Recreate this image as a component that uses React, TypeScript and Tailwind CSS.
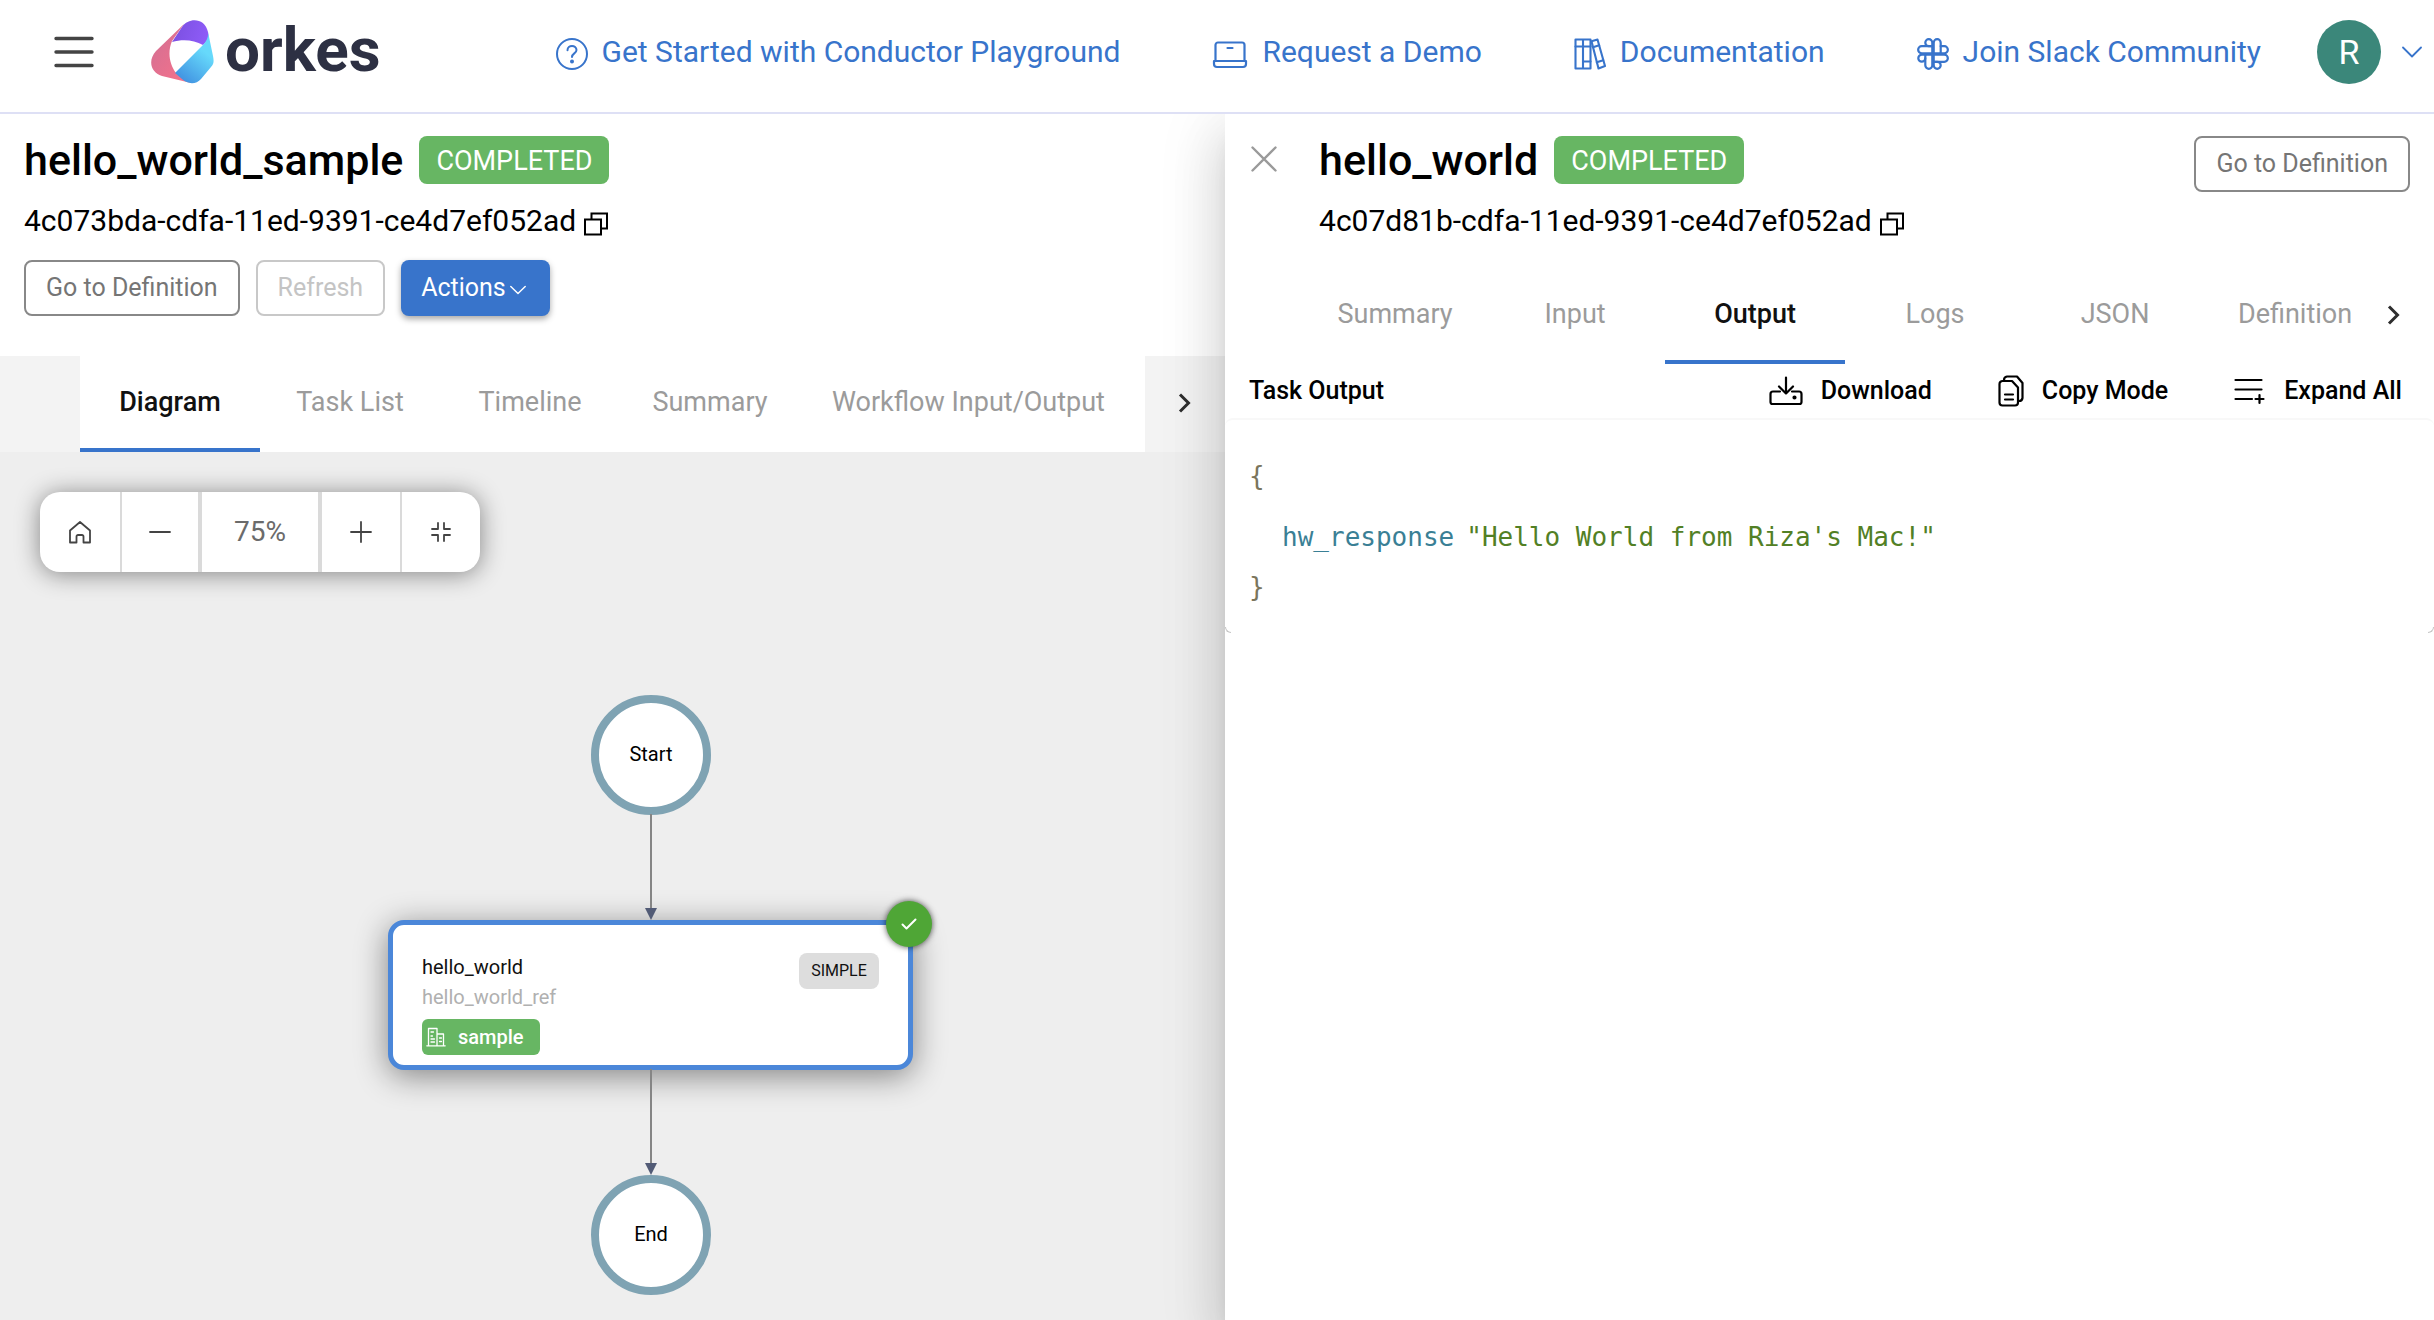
import type { ReactNode } from "react";

type IconProps = { className?: string };

const line = {
  fill: "none",
  stroke: "currentColor",
  strokeLinecap: "round",
  strokeLinejoin: "round",
} as const;

function LogoMark() {
  return (
    <svg viewBox="0 0 64 64" className="h-16 w-16" aria-hidden="true">
      <defs>
        <linearGradient id="mark-pink" x1="0" y1="0" x2="1" y2="1">
          <stop offset="0" stopColor="#cf6f94" />
          <stop offset="1" stopColor="#f9728a" />
        </linearGradient>
        <linearGradient id="mark-purple" x1="0" y1="0.3" x2="1" y2="0.5">
          <stop offset="0" stopColor="#7a4fe0" />
          <stop offset="1" stopColor="#8f5cf8" />
        </linearGradient>
        <linearGradient id="mark-blue" x1="0.8" y1="0" x2="0.2" y2="1">
          <stop offset="0.3" stopColor="#66d9fb" />
          <stop offset="1" stopColor="#3f8fe0" />
        </linearGradient>
      </defs>
      <path d="M33 4 L5 31 C-3 40 -1 52 11 56 L40 63 L25 53 C19 45 16 33 21 21 Z" fill="url(#mark-pink)" />
      <path d="M21 22 L31 7 C38 -3 54 -2 57 12 L58 19 L52 25 C43 20 32 19 21 22 Z" fill="url(#mark-purple)" />
      <path d="M57 12 L62 36 C63 41 63 44 60 47 L50 59 C45 65 36 64 31 59 L24 53 L52 25 C56 21 57.500 17 57 12 Z" fill="url(#mark-blue)" />
    </svg>
  );
}

function HelpIcon() {
  return (
    <svg viewBox="0 0 32 32" className="h-8 w-8" {...line} strokeWidth="2" aria-hidden="true">
      <circle cx="16" cy="16" r="15" />
      <path d="M11.500 12.200 C11.500 6.500 20.500 6.500 20.500 12 C20.500 15.500 16 15.300 16 19" />
      <circle cx="16" cy="23.500" r="1" fill="currentColor" />
    </svg>
  );
}

function LaptopIcon() {
  return (
    <svg viewBox="0 0 35 32" className="h-8 w-9" {...line} strokeWidth="2.200" aria-hidden="true">
      <path d="M3 22 V7 a2.500 2.500 0 0 1 2.500 -2.500 H29.500 a2.500 2.500 0 0 1 2.500 2.500 V22" />
      <path d="M1.500 23 H33.500 V26 a3 3 0 0 1 -3 3 H4.500 a3 3 0 0 1 -3 -3 Z" />
      <path d="M15 10 H20" />
    </svg>
  );
}

function BooksIcon() {
  return (
    <svg viewBox="0 0 32 32" className="h-8 w-8" {...line} strokeWidth="2.100" aria-hidden="true">
      <path d="M1.500 1.500 H9 V30.500 H1.500 Z M9 1.500 H16.500 V30.500 H9 Z" />
      <path d="M1.500 8.500 H9 M9 8.500 H16.500 M9 23.500 H16.500" />
      <path d="M17.500 3.200 L23.500 1.500 L31 28 L24.500 30.500 Z" />
      <path d="M19 9.200 L25.200 7.300 M22.800 24.300 L29.200 22.200" />
    </svg>
  );
}

function SlackIcon() {
  return (
    <svg viewBox="0 0 32 32" className="h-8 w-8" {...line} strokeWidth="2.200" aria-hidden="true">
      <path d="M11.800 1.200 a3.500 3.500 0 0 1 3.500 3.500 V8.200 H11.800 a3.500 3.500 0 0 1 0 -7 Z" />
      <path d="M4.700 8.200 H15.300 V15.300 H4.700 a3.500 3.500 0 0 1 0 -7.100 Z" />
      <path d="M20.200 1.200 a3.500 3.500 0 0 1 3.500 3.500 V15.300 H16.700 V4.700 a3.500 3.500 0 0 1 3.500 -3.500 Z" />
      <path d="M23.700 8.200 H27.300 a3.500 3.500 0 0 1 0 7.100 H23.700" />
      <path d="M16.700 16.700 H27.300 a3.500 3.500 0 0 1 0 7.100 H16.700 Z" />
      <path d="M16.700 23.800 H20.200 a3.500 3.500 0 1 1 -3.500 3.500 Z" />
      <path d="M8.300 16.700 H15.300 V27.300 a3.500 3.500 0 0 1 -7 0 Z" />
      <path d="M8.300 16.700 H4.700 a3.500 3.500 0 1 0 3.600 3.600" />
    </svg>
  );
}

function ChevronDown({ className }: IconProps) {
  return (
    <svg viewBox="0 0 20 12" className={className} {...line} strokeWidth="1.800" aria-hidden="true">
      <path d="M1 1.500 L10 10.500 L19 1.500" />
    </svg>
  );
}

function ChevronRight() {
  return (
    <svg viewBox="0 0 14 20" className="h-5 w-3.5 text-[#2e2e2e]" fill="none" stroke="currentColor" strokeWidth="3" aria-hidden="true">
      <path d="M2 1.500 L10.500 10 L2 18.500" />
    </svg>
  );
}

function CopyIcon() {
  return (
    <svg viewBox="0 0 24 24" className="h-6 w-6" fill="none" stroke="currentColor" strokeWidth="2" aria-hidden="true">
      <path d="M1 7.500 H17 V22.500 H1 Z" />
      <path d="M7.500 7.500 V1.500 H23 V16.500 H17" />
    </svg>
  );
}

function CloseIcon() {
  return (
    <svg viewBox="0 0 26 26" className="h-[26px] w-[26px]" {...line} strokeWidth="2.400" aria-hidden="true">
      <path d="M1.500 1.500 L24.500 24.500 M24.500 1.500 L1.500 24.500" />
    </svg>
  );
}

function HomeIcon() {
  return (
    <svg viewBox="0 0 24 24" className="h-6 w-6" {...line} strokeWidth="1.800" aria-hidden="true">
      <path d="M2 10.500 L12 2 L22 10.500 V22.500 H15.500 V16.500 a1.500 1.500 0 0 0 -1.500 -1.500 H10 a1.500 1.500 0 0 0 -1.500 1.500 V22.500 H2 Z" />
    </svg>
  );
}

function MinusIcon() {
  return (
    <svg viewBox="0 0 22 22" className="h-[22px] w-[22px]" {...line} strokeWidth="1.800" aria-hidden="true">
      <path d="M1 11 H21" />
    </svg>
  );
}

function PlusIcon() {
  return (
    <svg viewBox="0 0 22 22" className="h-[22px] w-[22px]" {...line} strokeWidth="1.800" aria-hidden="true">
      <path d="M1 11 H21 M11 1 V21" />
    </svg>
  );
}

function FitIcon() {
  return (
    <svg viewBox="0 0 20 20" className="h-5 w-5" {...line} strokeWidth="1.800" aria-hidden="true">
      <path d="M1 7 H7 V1 M13 1 V7 H19 M1 13 H7 V19 M13 19 V13 H19" />
    </svg>
  );
}

function DownloadIcon() {
  return (
    <svg viewBox="0 0 34 30" className="h-[30px] w-[34px]" {...line} strokeWidth="2.200" aria-hidden="true">
      <path d="M11 15.500 H4 a2.500 2.500 0 0 0 -2.500 2.500 V26 a2 2 0 0 0 2 2 H30.500 a2 2 0 0 0 2 -2 V18 a2.500 2.500 0 0 0 -2.500 -2.500 H23" />
      <path d="M17 1.500 V17.500 M10 10.500 L17 17.500 L24 10.500" />
      <circle cx="25.500" cy="21.500" r="1" fill="currentColor" />
    </svg>
  );
}

function CopyModeIcon() {
  return (
    <svg viewBox="0 0 26 32" className="h-8 w-[26px]" {...line} strokeWidth="2.200" aria-hidden="true">
      <path d="M1.500 9 a3 3 0 0 1 3 -3 H14 L20 12.500 V27.500 a3 3 0 0 1 -3 3 H4.500 a3 3 0 0 1 -3 -3 Z" />
      <path d="M6 5 a3.500 3.500 0 0 1 3 -3.500 H19 L24.500 8 V23 a3.500 3.500 0 0 1 -3.500 3" />
      <path d="M7 19.500 H15 M7 24.500 H15" />
    </svg>
  );
}

function ExpandIcon() {
  return (
    <svg viewBox="0 0 32 28" className="h-7 w-8" {...line} strokeWidth="2.200" aria-hidden="true">
      <path d="M1.500 3 H27.500 M1.500 12.500 H27.500 M1.500 22 H18 M21.500 22 H29.500 M25.500 18 V26" />
    </svg>
  );
}

function OfficeIcon() {
  return (
    <svg viewBox="0 0 20 20" className="h-5 w-5" {...line} strokeWidth="1.300" aria-hidden="true">
      <path d="M0.800 18.800 H19.200 M2.500 18.800 V1.500 H11 V18.800 M11 7 H17.500 V18.800" />
      <path d="M5 5 H7.500 M5 9 H6.500 M5 12 H8.500 M5 15 H8.500 M13.500 11 H15.500 M13.500 14.500 H15.500" />
    </svg>
  );
}

function NavLink({ icon, children }: { icon: ReactNode; children: string }) {
  return (
    <a href="#" className="flex items-center gap-3.5 whitespace-nowrap text-[30px] leading-9 text-[#3874cb]">
      <span className="mt-1">{icon}</span>
      {children}
    </a>
  );
}

function Title({ name, id }: { name: string; id: string }) {
  return (
    <div>
      <div className="flex items-center gap-4">
        <h1 className="text-[43px] font-medium leading-[48px]">{name}</h1>
        <span className="flex h-12 items-center rounded-lg bg-[#67b663] px-[17px] pt-0.5 text-[27px] text-white">COMPLETED</span>
      </div>
      <div className="mt-[19px] flex items-center gap-2 text-[30px] leading-9">
        {id}
        <button type="button" aria-label="Copy id" className="mt-1.5">
          <CopyIcon />
        </button>
      </div>
    </div>
  );
}

function OutlineButton({ children, disabled }: { children: string; disabled?: boolean }) {
  return (
    <button
      type="button"
      disabled={disabled}
      className="h-14 whitespace-nowrap rounded-lg border-2 border-[#888888] px-5 text-[25px] text-[#757575] disabled:border-[#c8c8c8] disabled:text-[#c4c4c4]"
    >
      {children}
    </button>
  );
}

function Tab({ children, active }: { children: string; active?: boolean }) {
  return (
    <button
      type="button"
      role="tab"
      aria-selected={!!active}
      className={
        active
          ? "h-24 min-w-[180px] shrink-0 border-b-4 border-[#3874cb] px-4 text-[27px] font-medium text-[#111111]"
          : "h-24 min-w-[180px] shrink-0 whitespace-nowrap px-8 pb-1 text-[27px] text-[#9b9b9b]"
      }
    >
      {children}
    </button>
  );
}

function Action({ icon, children }: { icon: ReactNode; children: string }) {
  return (
    <button type="button" className="flex items-center gap-[18px] whitespace-nowrap text-[25px] font-medium">
      {icon}
      {children}
    </button>
  );
}

function Edge({ className }: IconProps) {
  return (
    <svg viewBox="0 0 14 106" className={className} aria-hidden="true">
      <path d="M7 0 V94" stroke="#858585" strokeWidth="2" />
      <path d="M1 94 H13 L7 106 Z" fill="#525b76" />
    </svg>
  );
}

function Diagram() {
  return (
    <section className="relative flex-1 overflow-hidden bg-[#eeeeee] text-xl">
      <div className="m-10 flex h-20 w-[440px] overflow-visible rounded-[20px] bg-white text-[#444444] shadow-[0_2px_24px_rgba(0,0,0,0.45)]">
        <button type="button" aria-label="Home" className="flex w-[82px] items-center justify-center border-r-2 border-[#dadada]"><HomeIcon /></button>
        <button type="button" aria-label="Zoom out" className="flex w-20 items-center justify-center border-r-4 border-[#dadada]"><MinusIcon /></button>
        <output className="flex flex-1 items-center justify-center border-r-4 border-[#dadada] text-[28px] text-[#6b6b6b]">75%</output>
        <button type="button" aria-label="Zoom in" className="flex w-20 items-center justify-center border-r-2 border-[#dadada]"><PlusIcon /></button>
        <button type="button" aria-label="Fit to screen" className="flex w-[78px] items-center justify-center"><FitIcon /></button>
      </div>

      <div className="absolute left-[591px] top-[243px] flex h-[120px] w-[120px] items-center justify-center rounded-full border-8 border-[#7fa3b3] bg-white pb-0.5">Start</div>

      <article className="absolute left-[388px] top-[468px] h-[150px] w-[525px] rounded-2xl border-[5px] border-[#4b87d9] bg-white shadow-[0_6px_32px_rgba(0,0,0,0.45)]">
        <div className="flex items-start justify-between px-[29px] pt-7">
          <div>
            <h2 className="pt-0.5 leading-6 text-[#111111]">hello_world</h2>
            <p className="mt-1.5 leading-6 text-[#b0b0b0]">hello_world_ref</p>
            <p className="mt-2.5 flex h-9 w-[118px] items-center gap-3 rounded-md bg-[#67b663] pl-1 font-medium text-white">
              <OfficeIcon />
              sample
            </p>
          </div>
          <span className="flex h-9 w-20 items-center justify-center rounded-lg bg-[#dddddd] text-base text-[#111111]">SIMPLE</span>
        </div>
        <span className="absolute -right-6 -top-6 flex h-[46px] w-[46px] items-center justify-center rounded-full bg-[#4fa636] text-white shadow-[0_0_6px_rgba(0,0,0,0.7)]">
          <svg viewBox="0 0 16 12" className="h-3 w-4" {...line} strokeWidth="2" aria-label="Completed">
            <path d="M1.500 6.500 L5.500 10.500 L14.500 1.500" />
          </svg>
        </span>
      </article>

      <Edge className="absolute left-[644px] top-[362px] h-[106px] w-3.5" />
      <Edge className="absolute left-[644px] top-[617px] h-[106px] w-3.5" />

      <div className="absolute left-[591px] top-[723px] flex h-[120px] w-[120px] items-center justify-center rounded-full border-8 border-[#7fa3b3] bg-white pb-0.5">End</div>
    </section>
  );
}

function TaskPanel() {
  return (
    <aside className="relative w-[49.67%] shrink-0 bg-white shadow-[0_16px_20px_-10px_rgba(0,0,0,0.12),0_32px_48px_4px_rgba(0,0,0,0.12),0_12px_60px_10px_rgba(0,0,0,0.08)]">
      <div className="flex items-start pl-[26px] pr-6 pt-[22px]">
        <button type="button" aria-label="Close" className="mr-[42px] mt-[10px] text-[#9a9a9a]">
          <CloseIcon />
        </button>
        <Title name="hello_world" id="4c07d81b-cdfa-11ed-9391-ce4d7ef052ad" />
        <div className="ml-auto">
          <OutlineButton>Go to Definition</OutlineButton>
        </div>
      </div>

      <div className="mt-[29px] flex items-center pl-20">
        <div role="tablist" className="flex min-w-0 flex-1 overflow-hidden">
          <Tab>Summary</Tab>
          <Tab>Input</Tab>
          <Tab active>Output</Tab>
          <Tab>Logs</Tab>
          <Tab>JSON</Tab>
          <Tab>Definition</Tab>
        </div>
        <button type="button" aria-label="More tabs" className="flex h-24 w-20 items-center justify-center pb-0.5">
          <ChevronRight />
        </button>
      </div>

      <div className="flex h-[54px] items-center gap-[66px] pl-6 pr-8">
        <h2 className="mr-auto text-[25px] font-medium">Task Output</h2>
        <Action icon={<DownloadIcon />}>Download</Action>
        <Action icon={<CopyModeIcon />}>Copy Mode</Action>
        <Action icon={<ExpandIcon />}>Expand All</Action>
      </div>

      <div className="relative rounded-t-lg border-t-2 border-[#f8f8f8] px-6 pb-[26px] pt-9 font-['DejaVu_Sans_Mono',monospace] text-[26px] leading-10 text-[#7a755c]">
        <p>{"{"}</p>
        <p className="mt-[11px] flex gap-3 pl-[33px] leading-[60px]">
          <span className="text-[#3a7f95]">hw_response</span>
          <span className="text-[#528025]">&quot;Hello World from Riza&#39;s Mac!&quot;</span>
        </p>
        <p>{"}"}</p>
        <span className="absolute bottom-0 left-0 h-1.5 w-1.5 rounded-bl-md border-b border-l border-[#c4c4c4]" />
        <span className="absolute bottom-0 right-0 h-1.5 w-1.5 rounded-br-md border-b border-r border-[#c4c4c4]" />
      </div>
    </aside>
  );
}

export default function App() {
  return (
    <div className="flex min-h-screen flex-col bg-white font-['Roboto',sans-serif] text-black">
      <header className="relative z-10 flex h-[114px] items-center border-b-2 border-[#dee0f5] bg-white pb-2 pl-[54px] pr-3">
        <button type="button" aria-label="Menu">
          <svg viewBox="0 0 40 32" className="h-8 w-10" stroke="#444444" strokeWidth="3.400" strokeLinecap="round" aria-hidden="true">
            <path d="M2 2.500 H38 M2 16 H38 M2 29.500 H38" />
          </svg>
        </button>
        <a href="#" aria-label="orkes" className="ml-[57px] flex items-center gap-2.5 text-[#2d3043]">
          <LogoMark />
          <span className="-mt-1 text-[62px] font-bold leading-none">orkes</span>
        </a>
        <nav className="ml-auto flex items-center gap-[92px]">
          <NavLink icon={<HelpIcon />}>Get Started with Conductor Playground</NavLink>
          <NavLink icon={<LaptopIcon />}>Request a Demo</NavLink>
          <NavLink icon={<BooksIcon />}>Documentation</NavLink>
          <NavLink icon={<SlackIcon />}>Join Slack Community</NavLink>
        </nav>
        <button type="button" aria-label="Account menu" className="ml-[56px] flex items-center gap-[21px] text-[#3874cb]">
          <span className="flex h-16 w-16 items-center justify-center rounded-full bg-[#3b877a] text-[34px] text-white">R</span>
          <ChevronDown className="h-3 w-5" />
        </button>
      </header>

      <div className="flex flex-1">
        <main className="flex min-w-0 flex-1 flex-col">
          <div className="px-6 pb-10 pt-[22px]">
            <Title name="hello_world_sample" id="4c073bda-cdfa-11ed-9391-ce4d7ef052ad" />
            <div className="mt-[21px] flex gap-4">
              <OutlineButton>Go to Definition</OutlineButton>
              <OutlineButton disabled>Refresh</OutlineButton>
              <button type="button" className="flex h-14 items-center gap-1 rounded-lg bg-[#3874cb] pl-5 pr-6 text-[25px] text-white shadow-[0_3px_6px_rgba(0,0,0,0.35)]">
                Actions
                <ChevronDown className="mt-1 h-2.5 w-4" />
              </button>
            </div>
          </div>
          <div className="flex bg-[#f3f3f3] pl-20">
            <div role="tablist" className="flex min-w-0 flex-1 overflow-hidden bg-white">
              <Tab active>Diagram</Tab>
              <Tab>Task List</Tab>
              <Tab>Timeline</Tab>
              <Tab>Summary</Tab>
              <Tab>Workflow Input/Output</Tab>
            </div>
            <button type="button" aria-label="More tabs" className="flex h-24 w-20 items-center justify-center pb-0.5">
              <ChevronRight />
            </button>
          </div>
          <Diagram />
        </main>
        <TaskPanel />
      </div>
    </div>
  );
}
